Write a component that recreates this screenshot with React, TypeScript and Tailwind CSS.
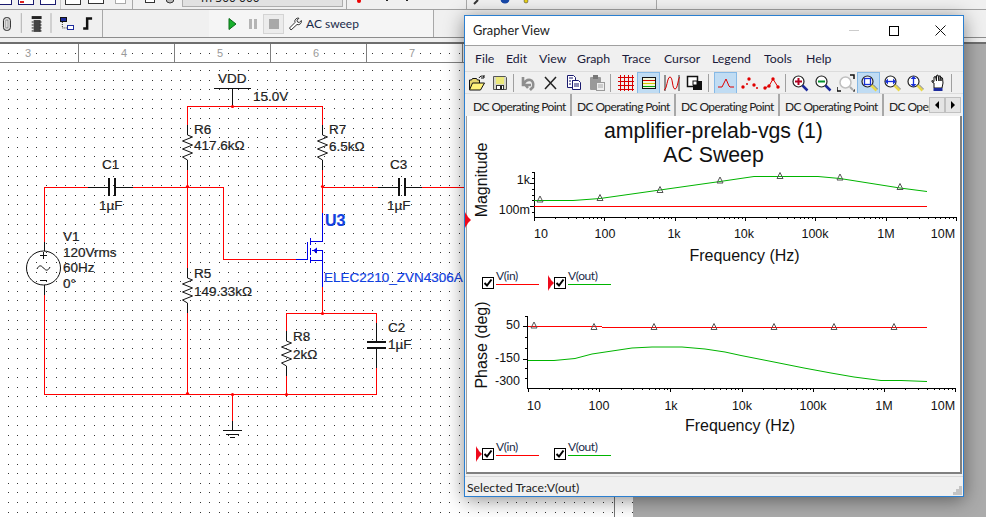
import type { ReactNode } from "react"

const ui = "font-['Lato',sans-serif]"

// ---------- circuit canvas ----------

function dotGrid() {
  let d = ""
  for (let i = 0; i < 66; i++) {
    for (let j = 0; j < 48; j++) {
      d += `M${Math.round(7.6 + 9.6 * i)} ${Math.round(70 + 9.6 * j)}h1v1h-1z`
    }
  }
  return d
}

function zig(x: number, y: number) {
  // resistor, 25px tall, drawn top to bottom
  return `M${x} ${y} l5 2 l-10 4 l10 4 l-10 4 l10 4 l-10 4 l5 3`
}

function Label({ x, y, children, blue, size = 13.5, bold }: { x: number; y: number; children: ReactNode; blue?: boolean; size?: number; bold?: boolean }) {
  return (
    <text x={x} y={y} fontSize={size} fontWeight={bold ? 700 : 400} fill={blue ? "#1040e0" : "#222"} stroke={blue ? "#1040e0" : "#222"} strokeWidth={0.2} fontFamily="'Liberation Sans', sans-serif">
      {children}
    </text>
  )
}

function Circuit() {
  const red = "#ff0000"
  const junctions = [[232, 106], [187, 186], [322, 186], [322, 313], [286, 394], [232, 394], [187, 393]]
  return (
    <svg width={633} height={454} viewBox="0 63 633 454" className="block bg-white">
      <path d={dotGrid()} fill="#333" shapeRendering="crispEdges" />
      <line x1={614.5} y1={497} x2={614.5} y2={517} stroke="#777" />

      <g fill="none" stroke={red} strokeWidth={1} shapeRendering="crispEdges">
        <path d="M187.5 125V106.5H322.5V125" />
        <path d="M187.5 170V268M187.5 313V393.5" />
        <path d="M322.5 170V213" />
        <path d="M44.5 242V187.5H88M133 187.5H223.5V259.5H296" />
        <path d="M322.5 187.5H378M422 187.5H465" />
        <path d="M44.5 295V394.5H376.5V368M376.5 323V313.5H286.5V331M286.5 376V394" />
        <path d="M322.5 287V313" />
        <path d="M232.5 394V421" />
      </g>

      <g fill="none" stroke="#111" strokeWidth={1}>
        {/* VDD */}
        <path d="M214 88.5H251M232.5 88V106" shapeRendering="crispEdges" />
        {/* C1, C3 */}
        <path d="M88 187.5H108M114 187.5H133M378 187.5H398M404 187.5H422" shapeRendering="crispEdges" />
        <path d="M108.5 178V196M114.5 178V196M398.5 178V196M404.5 178V196" strokeWidth={2} shapeRendering="crispEdges" />
        {/* C2 */}
        <path d="M376.5 323V341M376.5 347V368" shapeRendering="crispEdges" />
        <path d="M367 341.5H386M367 347.5H386" strokeWidth={2} shapeRendering="crispEdges" />
        {/* resistors */}
        <path d="M187.5 125V135M187.5 160V170M322.5 125V135M322.5 160V170M187.5 268V278M187.5 303V313M286.5 331V341M286.5 366V376" shapeRendering="crispEdges" />
        <path d={zig(187.5, 135)} />
        <path d={zig(322.5, 135)} />
        <path d={zig(187.5, 278)} />
        <path d={zig(286.5, 341)} />
        {/* V1 */}
        <path d="M44.5 242V251M44.5 285V295" shapeRendering="crispEdges" />
        <circle cx={43.5} cy={268} r={17} />
        <path d="M40 255.5h7M43.5 252v7M40 280.5h7" />
        <path d="M37 269c2-4 4-4 6.500-1s4.500 3 6.500-1" />
        {/* ground */}
        <path d="M232.5 421V430M223 430.500H242M226 434.500H239M230 437.500H235" shapeRendering="crispEdges" />
      </g>

      {/* MOSFET */}
      <g fill="none" stroke="#0000e8" strokeWidth={1} shapeRendering="crispEdges">
        <path d="M322.500 213V241.500H310M310 238V245M310 248V255M310 257V263M307.500 242V260M296 259.500H307M322.500 250V287M310 260.500H322M312 250.500H322" />
      </g>
      <path d="M313 250.500l4-3v6z" fill="#0000e8" />

      {junctions.map(([x, y]) => (
        <circle key={`${x}-${y}`} cx={x + 0.5} cy={y + 0.5} r={1.6} fill={red} />
      ))}

      <Label x={218} y={83}>VDD</Label>
      <Label x={253} y={101}>15.0V</Label>
      <Label x={194} y={134}>R6</Label>
      <Label x={194} y={150}>417.6kΩ</Label>
      <Label x={329} y={134}>R7</Label>
      <Label x={329} y={151}>6.5kΩ</Label>
      <Label x={102} y={169}>C1</Label>
      <Label x={99} y={210}>1µF</Label>
      <Label x={390} y={169}>C3</Label>
      <Label x={387} y={210}>1µF</Label>
      <Label x={63} y={241}>V1</Label>
      <Label x={63} y={257}>120Vrms</Label>
      <Label x={63} y={272}>60Hz</Label>
      <Label x={63} y={288}>0°</Label>
      <Label x={194} y={278}>R5</Label>
      <Label x={194} y={296}>149.33kΩ</Label>
      <Label x={325} y={226} size={16} blue bold>U3</Label>
      <Label x={324} y={282} blue>ELEC2210_ZVN4306A</Label>
      <Label x={293} y={341}>R8</Label>
      <Label x={293} y={359}>2kΩ</Label>
      <Label x={388} y={332}>C2</Label>
      <Label x={388} y={349}>1µF</Label>
    </svg>
  )
}

function Ruler() {
  const nums = ["3", "4", "5", "6", "7"]
  let dots = ""
  for (let i = 0; i < 66; i++) dots += `M${Math.round(7.6 + 9.6 * i)} 9h1v1h-1z`
  return (
    <div className="relative h-[19px] shrink-0 overflow-hidden bg-white border-b border-[#808080]">
      <svg width={633} height={18} className="absolute left-0 top-0">
        <path d={dots} fill="#333" shapeRendering="crispEdges" />
      </svg>
      <div className="relative flex -ml-[17px] h-full">
        {nums.map((n) => (
          <div key={n} className="w-[96px] shrink-0 border-r border-[#808080] pr-[5px] text-center text-[11px] leading-[18px] text-[#999] font-['Liberation_Sans',sans-serif]">
            <span className="bg-white px-px">{n}</span>
          </div>
        ))}
      </div>
    </div>
  )
}

// ---------- main window toolbars ----------

function TopStrip() {
  return (
    <svg width={986} height={10} className="block shrink-0">
      <g fill="#fff" stroke="#1a1a6e" shapeRendering="crispEdges">
        <rect x={-3} y={-6} width={14} height={10} />
        <rect x={18.500} y={-6} width={15} height={10} />
        <rect x={40.500} y={-6} width={15} height={10} />
        <rect x={65.500} y={-6} width={15} height={10} stroke="#333" />
        <rect x={88.500} y={-6} width={15} height={9} stroke="#333" />
        <rect x={115.500} y={-6} width={10} height={9} stroke="#aaa" />
        <rect x={145.500} y={-6} width={9} height={8} stroke="#333" />
      </g>
      <rect x={20} y={1} width={4} height={2} fill="#d22" />
      <rect x={60} y={0} width={1} height={9} fill="#c8c8c8" />
      <rect x={132} y={0} width={1} height={9} fill="#a8a8a8" />
      <circle cx={170} cy={-1} r={4} fill="#bbb" stroke="#333" />
      <rect x={182.500} y={-2} width={160} height={8.500} fill="#e1e1e1" stroke="#adadad" shapeRendering="crispEdges" />
      <text x={201} y={2} fontSize={12} fill="#222" fontFamily="'Noto Sans', sans-serif">m 500 000</text>
      <rect x={346} y={0} width={1} height={9} fill="#a8a8a8" />
      <circle cx={359} cy={1} r={2} fill="#e00" />
      <rect x={386} y={0} width={2} height={1} fill="#222" />
      <rect x={406} y={0} width={2} height={1} fill="#222" />
      <rect x={466} y={0} width={1} height={9} fill="#a8a8a8" />
      <path d="M474 4l4-4" stroke="#333" strokeWidth={2} />
      <circle cx={505} cy={-1} r={4.500} fill="#1848a8" />
      <circle cx={526} cy={1} r={2} fill="#e8d018" stroke="#333" strokeWidth={0.5} />
      <rect x={656} y={0} width={1} height={9} fill="#a8a8a8" />
      <rect x={0} y={9} width={986} height={1} fill="#a0a0a0" />
    </svg>
  )
}

function MainToolbar() {
  return (
    <div className="flex h-[28px] shrink-0 border-b border-[#8c8c8c]">
      <div className="flex w-[103px] items-center border-r border-[#a8a8a8]">
        <svg width={103} height={27} viewBox="0 0 103 27" className="block">
          <rect x={3.500} y={7.500} width={7} height={13} rx={3} fill="#ddd" stroke="#222" />
          <rect x={6} y={10} width={2} height={8} fill="#fff" stroke="#444" strokeWidth={0.5} />
          <rect x={21} y={3} width={1} height={20} fill="#b0b0b0" />
          <rect x={32} y={6} width={10} height={3} fill="#222" />
          <rect x={34} y={10} width={7} height={12} fill="#444" />
          <path d="M32 12h12M32 15h12M32 18h12M32 21h12" stroke="#222" strokeDasharray="2 6" />
          <rect x={51} y={3} width={1} height={20} fill="#b0b0b0" />
          <rect x={61.500} y={7.500} width={6} height={4} fill="#1c2a9c" stroke="#111" shapeRendering="crispEdges" />
          <rect x={68.500} y={15.500} width={6} height={4} fill="#fff" stroke="#1c2a9c" shapeRendering="crispEdges" />
          <path d="M63 12v6h5" stroke="#333" strokeDasharray="1 1" fill="none" />
          <path d="M84 18.500h4V8.500h5" fill="none" stroke="#111" strokeWidth={2.500} />
        </svg>
      </div>
      <div className="w-[106px]" />
      <div className={`flex w-[225px] items-center border-r border-[#a8a8a8] bg-[#f5f5f5] ${ui}`}>
        <svg width={12} height={14} viewBox="0 0 12 14" className="ml-[17px]">
          <path d="M3 1.500l7 5.500-7 5.500z" fill="#18b02c" stroke="#0a6a18" />
        </svg>
        <div className="ml-[11px] flex gap-[2px]">
          <span className="h-[10px] w-[3px] bg-[#b4b4b4]" />
          <span className="h-[10px] w-[3px] bg-[#b4b4b4]" />
        </div>
        <div className="ml-[6px] flex h-[20px] w-[21px] items-center justify-center border border-[#d4d4d4] bg-[#ececec]">
          <span className="h-[10px] w-[10px] bg-[#a8a8a8]" />
        </div>
        <svg width={14} height={14} viewBox="0 0 14 14" className="ml-[4px]">
          <path d="M1.500 11l5.500-5.500a3.300 3.300 0 0 1 4-4.300l-2 2 .5 1.800 1.800.5 2-2a3.300 3.300 0 0 1-4.300 4L3 13z" fill="#fff" stroke="#333" />
        </svg>
        <span className="ml-[4px] text-[12px] text-[#1a2b4a]">AC sweep</span>
      </div>
    </div>
  )
}

// ---------- grapher icons ----------

function Ico({ children }: { children: ReactNode }) {
  return (
    <svg width={18} height={18} viewBox="0 0 18 18" className="block">
      {children}
    </svg>
  )
}

function Mag({ lens = "#fff", handle = "#1c2a9c", children, pencil }: { lens?: string; handle?: string; children?: ReactNode; pencil?: boolean }) {
  return (
    <Ico>
      <circle cx={7.500} cy={7.500} r={5.500} fill={lens} stroke="#222" strokeWidth={1.200} />
      {children}
      <path d="M11.500 11.500l5 5" stroke={pencil ? "#e8d84a" : handle} strokeWidth={2.500} />
      {pencil && <path d="M11.500 11.500l5 5" stroke="#333" strokeWidth={0.6} transform="translate(1.500 -1)" />}
    </Ico>
  )
}

const icons: Record<string, ReactNode> = {
  open: (
    <Ico>
      <path d="M1.500 16V6h2l1-1.500h4l1 1.500h2v3" fill="#e8d870" stroke="#111" />
      <path d="M1.500 16l3-7h12l-4 7z" fill="#fff27a" stroke="#111" />
      <path d="M11 4c1-2 3-2.500 5-1.500M16 1v3h-3" fill="none" stroke="#111" />
    </Ico>
  ),
  save: (
    <Ico>
      <path d="M2.500 2.500h12l1 1v12h-13z" fill="#d8d8c8" stroke="#555" />
      <rect x={5} y={3} width={8} height={7} fill="#ece97a" />
      <rect x={5.500} y={11.500} width={7} height={4} fill="#fff" stroke="#333" />
      <rect x={9} y={12} width={2} height={3} fill="#222" />
    </Ico>
  ),
  undo: (
    <Ico>
      <path d="M5 9.500l4 4.500 M4 3v8h8M4 11c4-8 12-6 10 2l-3 3" fill="none" stroke="#8e8e8e" strokeWidth={2.600} />
    </Ico>
  ),
  cut: (
    <Ico>
      <path d="M3 3l11 12M14 3L3 15" stroke="#222" strokeWidth={1.500} />
    </Ico>
  ),
  copy: (
    <Ico>
      <path d="M2.500 1.500h6l2 2v3h-3v7h-5z" fill="#fff" stroke="#1a1a6e" />
      <path d="M7.500 6.500h6l2 2v7h-8z" fill="#fff" stroke="#1a1a6e" />
      <path d="M4 4h4M4 7h2M4 10h2M9 10h5M9 12h5" stroke="#1a1a6e" />
    </Ico>
  ),
  paste: (
    <Ico>
      <rect x={2} y={3} width={11} height={13} rx={1} fill="#9a9a9a" />
      <rect x={5} y={1} width={5} height={4} fill="#777" />
      <rect x={8.500} y={8.500} width={8} height={8} fill="#eee" stroke="#999" />
      <path d="M10 11h5M10 13h5" stroke="#aaa" />
    </Ico>
  ),
  grid: (
    <Ico>
      <path d="M1 3.500h16M1 7.500h16M1 11.500h16M1 15.500h16M3.500 1v16M7.500 1v16M11.500 1v16M15.500 1v16" stroke="#d80000" shapeRendering="crispEdges" />
    </Ico>
  ),
  legend: (
    <Ico>
      <rect x={2.500} y={3.500} width={13} height={11} fill="#f4f4d8" stroke="#111" shapeRendering="crispEdges" />
      <path d="M3 6.500h12" stroke="#d80000" shapeRendering="crispEdges" />
      <path d="M3 9.500h12" stroke="#d8c800" shapeRendering="crispEdges" />
      <path d="M3 12.500h12" stroke="#00a010" shapeRendering="crispEdges" />
    </Ico>
  ),
  wave: (
    <Ico>
      <path d="M2 1v16M16 1v16" stroke="#333" />
      <path d="M1 16C4 16 4 3 7 3s2 12 5 12 3-12 5-12" fill="none" stroke="#d80000" />
    </Ico>
  ),
  overlap: (
    <Ico>
      <rect x={1.500} y={2.500} width={10} height={10} fill="#fff" stroke="#111" strokeWidth={1.500} />
      <rect x={7} y={7} width={9} height={9} fill="#111" />
      <rect x={7} y={7} width={4} height={4} fill="#fff" stroke="#111" />
    </Ico>
  ),
  peak: (
    <Ico>
      <path d="M1 13h4l4-8 3 7 1 1h4" fill="none" stroke="#e00000" />
    </Ico>
  ),
  dots: (
    <Ico>
      <g fill="#e00000">
        <circle cx={3} cy={13} r={1.700} />
        <circle cx={9} cy={5} r={1.700} />
        <circle cx={14} cy={11} r={1.700} />
        <circle cx={7} cy={10} r={1} />
        <circle cx={17} cy={14} r={1} />
      </g>
    </Ico>
  ),
  dotline: (
    <Ico>
      <path d="M2 14l4-2 4-7 5 8" fill="none" stroke="#e00000" />
      <g fill="#e00000">
        <circle cx={2} cy={14} r={1.700} />
        <circle cx={6} cy={12} r={1.700} />
        <circle cx={10} cy={5} r={1.700} />
        <circle cx={15} cy={13} r={1.700} />
      </g>
    </Ico>
  ),
  zoomIn: (
    <Mag>
      <path d="M7.500 4v7M4 7.500h7" stroke="#b00020" strokeWidth={2} />
    </Mag>
  ),
  zoomOut: (
    <Mag>
      <path d="M4 7.500h7" stroke="#00902c" strokeWidth={2} />
    </Mag>
  ),
  zoomFit: (
    <Ico>
      <circle cx={8.500} cy={8.500} r={5.500} fill="#fff" stroke="#c0c0c0" strokeWidth={1.500} />
      <path d="M13 13l3 3" stroke="#aaa" strokeWidth={2} />
      <path d="M0 13v4h4M17 5V1h-4" fill="none" stroke="#111" strokeWidth={1.500} />
      <path d="M16 17h2v-2" fill="none" stroke="#111" />
    </Ico>
  ),
  zoomBox: (
    <Mag pencil>
      <rect x={4.500} y={4.500} width={6} height={6} fill="none" stroke="#1830d8" strokeWidth={1.300} />
    </Mag>
  ),
  zoomH: (
    <Mag pencil>
      <path d="M3 7.500h9" stroke="#1830d8" strokeWidth={1.300} />
      <path d="M2 7.500l3-3v6zM13 7.500l-3-3v6z" fill="#1830d8" />
    </Mag>
  ),
  zoomV: (
    <Mag pencil>
      <path d="M7.500 3v9" stroke="#1830d8" strokeWidth={1.300} />
      <path d="M7.500 2l-3 3h6zM7.500 13l-3-3h6z" fill="#1830d8" />
    </Mag>
  ),
  hand: (
    <Ico>
      <path d="M5 14V9L3 8V6.500l2 1V3l1.500-.5L7.500 7V1.500l1.500-.5L10 7V2l1.500 0 .5 5V3.500L13.500 4l.5 5-1 5z" fill="#fff" stroke="#111" />
      <rect x={4.500} y={14} width={9} height={3} fill="#1c2a9c" />
    </Ico>
  ),
}

function Tool({ name, active }: { name: string; active?: boolean }) {
  return (
    <div className={`flex h-[22px] w-[23px] shrink-0 items-center justify-center border ${active ? "border-[#86b9e6] bg-[#c0dcf3]" : "border-transparent"}`}>
      {icons[name]}
    </div>
  )
}

function ToolSep({ className = "mx-[2px]" }: { className?: string }) {
  return <div className={`h-[18px] w-px shrink-0 bg-[#a0a0a0] ${className}`} />
}

// ---------- plots ----------

type PlotProps = {
  top: number
  height: number
  axisX: number
  axisY: number
  axisTop: number
  x0: number
  decade: number
  yTicks: number[]
  yMajor: number[]
  xLabels: [string, number][]
  labelY: number
  yLabels: [string, number][]
  yLabelX: number
  green: number[][]
  red: string
  marks: number[][]
  xTitleX: number
  xTitleY: number
  yTitle: string
  yTitleY: number
}

const decades = [0, 1, 2, 3, 4, 5]

function Plot(p: PlotProps) {
  const pts = (a: number[][]) => a.map((q) => q.join(",")).join(" ")
  const major = decades.concat(6).map((i) => p.x0 + i * p.decade)
  const minor: number[] = []
  decades.forEach((i) => {
    for (let m = 2; m < 10; m++) minor.push(p.x0 + (i + Math.log10(m)) * p.decade)
  })
  const right = p.x0 + 6 * p.decade
  return (
    <svg width={495} height={p.height} viewBox={`466 ${p.top} 495 ${p.height}`} className="block shrink-0 overflow-visible font-['Liberation_Sans',sans-serif]">
      <g stroke="#000" shapeRendering="crispEdges">
        <line x1={p.axisX + 0.5} y1={p.axisTop} x2={p.axisX + 0.5} y2={p.axisY + 1} />
        <line x1={p.axisX} y1={p.axisY + 0.5} x2={right + 1} y2={p.axisY + 0.5} />
        {major.map((x) => (
          <line key={x} x1={Math.round(x) + 0.5} y1={p.axisY} x2={Math.round(x) + 0.5} y2={p.axisY + 4} />
        ))}
        {minor.map((x) => (
          <line key={x} x1={Math.round(x) + 0.5} y1={p.axisY} x2={Math.round(x) + 0.5} y2={p.axisY + 2} />
        ))}
        {p.yTicks.map((y) => (
          <line key={y} x1={p.axisX - 2} y1={y + 0.5} x2={p.axisX} y2={y + 0.5} />
        ))}
        {p.yMajor.map((y) => (
          <line key={y} x1={p.axisX - 4} y1={y + 0.5} x2={p.axisX} y2={y + 0.5} />
        ))}
      </g>
      <polyline points={pts(p.green)} fill="none" stroke="#00b400" strokeWidth={1} />
      <path d={p.red} fill="none" stroke="#ff0000" strokeWidth={1} shapeRendering="crispEdges" />
      {p.marks.map(([x, y]) => (
        <polygon key={x} points={`${x - 3},${y + 3} ${x},${y - 3} ${x + 3},${y + 3}`} fill="none" stroke="#555" />
      ))}
      <g fontSize={12.500} fill="#111" textAnchor="middle">
        {p.xLabels.map(([t, x]) => (
          <text key={t} x={x} y={p.labelY}>{t}</text>
        ))}
      </g>
      <g fontSize={12.500} fill="#111" textAnchor="end">
        {p.yLabels.map(([t, y]) => (
          <text key={t} x={p.yLabelX} y={y}>{t}</text>
        ))}
      </g>
      <text x={p.xTitleX} y={p.xTitleY} fontSize={16} fill="#111" textAnchor="middle">Frequency (Hz)</text>
      <text transform={`translate(485.5 ${p.yTitleY}) rotate(-90)`} fontSize={16} fill="#111" textAnchor="middle">{p.yTitle}</text>
    </svg>
  )
}

function Marker({ className }: { className: string }) {
  return (
    <svg width={6} height={16} viewBox="0 0 6 16" className={className}>
      <path d="M0 0l1 2 1 1 1 2 1 1 2 2-2 2-1 1-1 2-1 1-1 2z" fill="#ee0a1c" />
    </svg>
  )
}

function Check() {
  return (
    <div className="flex h-[12px] w-[12px] shrink-0 items-center justify-center border border-black bg-white">
      <svg width={10} height={10} viewBox="0 0 10 10">
        <path d="M1.500 5l2.500 2.500 4.500-6" fill="none" stroke="#000" strokeWidth={2} />
      </svg>
    </div>
  )
}

function LegendItem({ label, line, selected }: { label: string; line: string; selected?: boolean }) {
  return (
    <div className="relative flex w-[58px] items-end gap-[2px]">
      {selected && <Marker className="absolute -left-[6px] -bottom-[2px]" />}
      <Check />
      <div className={`mb-[4px] h-[15px] w-[43px] border-b ${line} text-[12px] leading-[12px] tracking-[-0.4px] text-[#1a2b4a] ${ui}`}>{label}</div>
    </div>
  )
}

function Legend({ first, className }: { first?: boolean; className: string }) {
  return (
    <div className={`flex gap-[14px] pl-[15px] ${className}`}>
      <LegendItem label="V(in)" line="border-[#ff0000]" selected={!first} />
      <LegendItem label="V(out)" line="border-[#00b400]" selected={first} />
    </div>
  )
}

function GrapherView() {
  const menu = ["File", "Edit", "View", "Graph", "Trace", "Cursor", "Legend", "Tools", "Help"]
  const menuGap = ["w-[31px]", "w-[33px]", "w-[38px]", "w-[45px]", "w-[42px]", "w-[48px]", "w-[52px]", "w-[42px]", "w-[40px]"]
  return (
    <div className={`absolute left-[464px] top-[15px] flex h-[482px] w-[500px] flex-col border border-[#2b7fd0] bg-[#f0f0f0] shadow-[0_3px_18px_rgba(0,0,0,0.45)] ${ui}`}>
      {/* title bar */}
      <div className="flex h-[30px] shrink-0 items-center border-b border-[#a0a0a0] bg-white">
        <span className="ml-[8px] pt-[1px] text-[12.8px] text-[#222]">Grapher View</span>
        <span className="ml-auto h-px w-[10px] bg-[#ccc]" />
        <span className="ml-[30px] h-[10px] w-[10px] border border-black" />
        <svg width={11} height={11} viewBox="0 0 11 11" className="ml-[36px] mr-[17px]">
          <path d="M.5.5l10 10M10.500.5l-10 10" stroke="#111" />
        </svg>
      </div>

      {/* menu */}
      <div className="flex h-[25px] shrink-0 items-center pl-[10px] pt-[1px] text-[12.3px] text-[#1a1a3a]">
        {menu.map((m, i) => (
          <span key={m} className={menuGap[i]}>{m}</span>
        ))}
      </div>

      {/* toolbar */}
      <div className="flex h-[23px] shrink-0 items-center overflow-hidden border-y border-[#dcdcdc]">
        <Tool name="open" />
        <Tool name="save" />
        <ToolSep />
        <Tool name="undo" />
        <Tool name="cut" />
        <Tool name="copy" />
        <Tool name="paste" />
        <ToolSep className="ml-[2px] mr-[3px]" />
        <Tool name="grid" />
        <Tool name="legend" active />
        <Tool name="wave" />
        <Tool name="overlap" />
        <ToolSep className="ml-[2px] mr-[5px]" />
        <Tool name="peak" active />
        <Tool name="dots" />
        <Tool name="dotline" />
        <ToolSep />
        <Tool name="zoomIn" />
        <Tool name="zoomOut" />
        <Tool name="zoomFit" />
        <Tool name="zoomBox" active />
        <Tool name="zoomH" />
        <Tool name="zoomV" />
        <Tool name="hand" />
        <ToolSep />
      </div>

      {/* tabs */}
      <div className="flex h-[22px] shrink-0 items-start">
        <div className="flex h-full w-[464px] shrink-0 overflow-hidden pl-[3px]">
          {[0, 1, 2, 3, 4].map((t) => (
            <div key={t} className="h-full w-[104px] shrink-0 whitespace-nowrap border-r-2 border-r-[#a8a8a8] pl-[5px] text-[12px] leading-[26px] tracking-[-0.6px] text-[#222]">
              DC Operating Point
            </div>
          ))}
        </div>
        <div className="mt-[3px] flex">
          <div className="flex h-[16px] w-[16px] items-center justify-center border border-[#c0c0c0] bg-[#e4e4e4]">
            <span className="border-y-[4px] border-r-[4px] border-y-transparent border-r-black" />
          </div>
          <div className="flex h-[16px] w-[16px] items-center justify-center border border-[#c0c0c0] bg-[#e4e4e4]">
            <span className="border-y-[4px] border-l-[4px] border-y-transparent border-l-black" />
          </div>
        </div>
      </div>

      {/* graph */}
      <div className="relative mx-px flex flex-1 flex-col border-b-2 border-r-2 border-[#808080] border-l border-l-[#a0a0a0] bg-white">
        <div className="h-[51px] shrink-0 pt-[3px] text-center font-['Liberation_Sans',sans-serif] text-[21.3px] leading-[24px] text-[#111]">
          <div>amplifier-prelab-vgs (1)</div>
          <div>AC Sweep</div>
        </div>
        <Plot
          top={167}
          height={99}
          axisX={533}
          axisY={217}
          axisTop={172}
          x0={533}
          decade={70.3}
          yTicks={[172, 178, 189, 195, 200, 212]}
          yMajor={[183, 206]}
          xLabels={[["10", 540], ["100", 604], ["1k", 673], ["10k", 743], ["100k", 814], ["1M", 885], ["10M", 942]]}
          labelY={238}
          yLabels={[["1k", 184], ["100m", 214]]}
          yLabelX={529}
          green={[[533, 200.5], [572, 200.5], [599, 198.5], [659, 190], [719, 181.5], [753, 176.5], [817, 176.5], [839, 178.5], [899, 188], [926, 191.5]]}
          red="M533 206.500H926"
          marks={[[539, 199], [599, 197.5], [659, 189.5], [719, 180], [779, 175.5], [839, 177], [899, 186.5]]}
          xTitleX={743.5}
          xTitleY={261}
          yTitle="Magnitude"
          yTitleY={180}
        />
        <Legend first className="mt-[6px] h-[17px]" />
        <div className="h-[12px]" />
        <Plot
          top={301}
          height={135}
          axisX={526}
          axisY={388}
          axisTop={316}
          x0={527}
          decade={71.2}
          yTicks={[316, 337, 348, 368, 378]}
          yMajor={[326, 359]}
          xLabels={[["10", 533], ["100", 598], ["1k", 670], ["10k", 741], ["100k", 812], ["1M", 883], ["10M", 942]]}
          labelY={410}
          yLabels={[["50", 329], ["-150", 362], ["-300", 385]]}
          yLabelX={519}
          green={[[527, 360.5], [553, 360.5], [574, 358.5], [591, 354], [611, 351], [631, 348], [651, 347], [681, 347], [704, 349], [724, 352], [740, 355.5], [773, 362], [803, 368], [830, 373], [853, 377], [880, 380.5], [900, 380.5], [926, 381.5]]}
          red="M527 326.500H601M601 327.500H926"
          marks={[[533, 325], [593, 326.5], [653, 326.5], [713, 326.5], [773, 326.5], [833, 326.5], [893, 326.5]]}
          xTitleX={739}
          xTitleY={431}
          yTitle="Phase (deg)"
          yTitleY={345}
        />
        <Legend className="mt-[7px] h-[17px]" />
        <Marker className="absolute -left-[2px] top-[96px]" />
      </div>

      {/* status */}
      <div className="relative mt-[2px] flex h-[20px] shrink-0 items-center border-t border-[#d8d8d8] pl-[2px] pt-[3px] text-[12.2px] text-[#222]">
        Selected Trace:V(out)
        <svg width={9} height={9} viewBox="0 0 9 9" className="absolute bottom-[1px] right-[1px]">
          <path d="M6 0h3v3H6zM3 3h3v3H3zM6 3h3v3H6zM0 6h3v3H0zM3 6h3v3H3zM6 6h3v3H6z" fill="#c4c4c4" />
        </svg>
      </div>
    </div>
  )
}

export default function App() {
  return (
    <div className="relative flex h-[517px] w-[986px] flex-col overflow-hidden bg-[#f0f0f0]">
      <TopStrip />
      <MainToolbar />
      <div className="h-[4px] shrink-0" />
      <div className="h-[2px] shrink-0 bg-[#6e6e6e]" />
      <div className="flex min-h-0 flex-1">
        <div className="w-[633px] shrink-0">
          <Ruler />
          <Circuit />
        </div>
        <div className="flex-1 bg-[#ababab]" />
      </div>
      <GrapherView />
    </div>
  )
}
